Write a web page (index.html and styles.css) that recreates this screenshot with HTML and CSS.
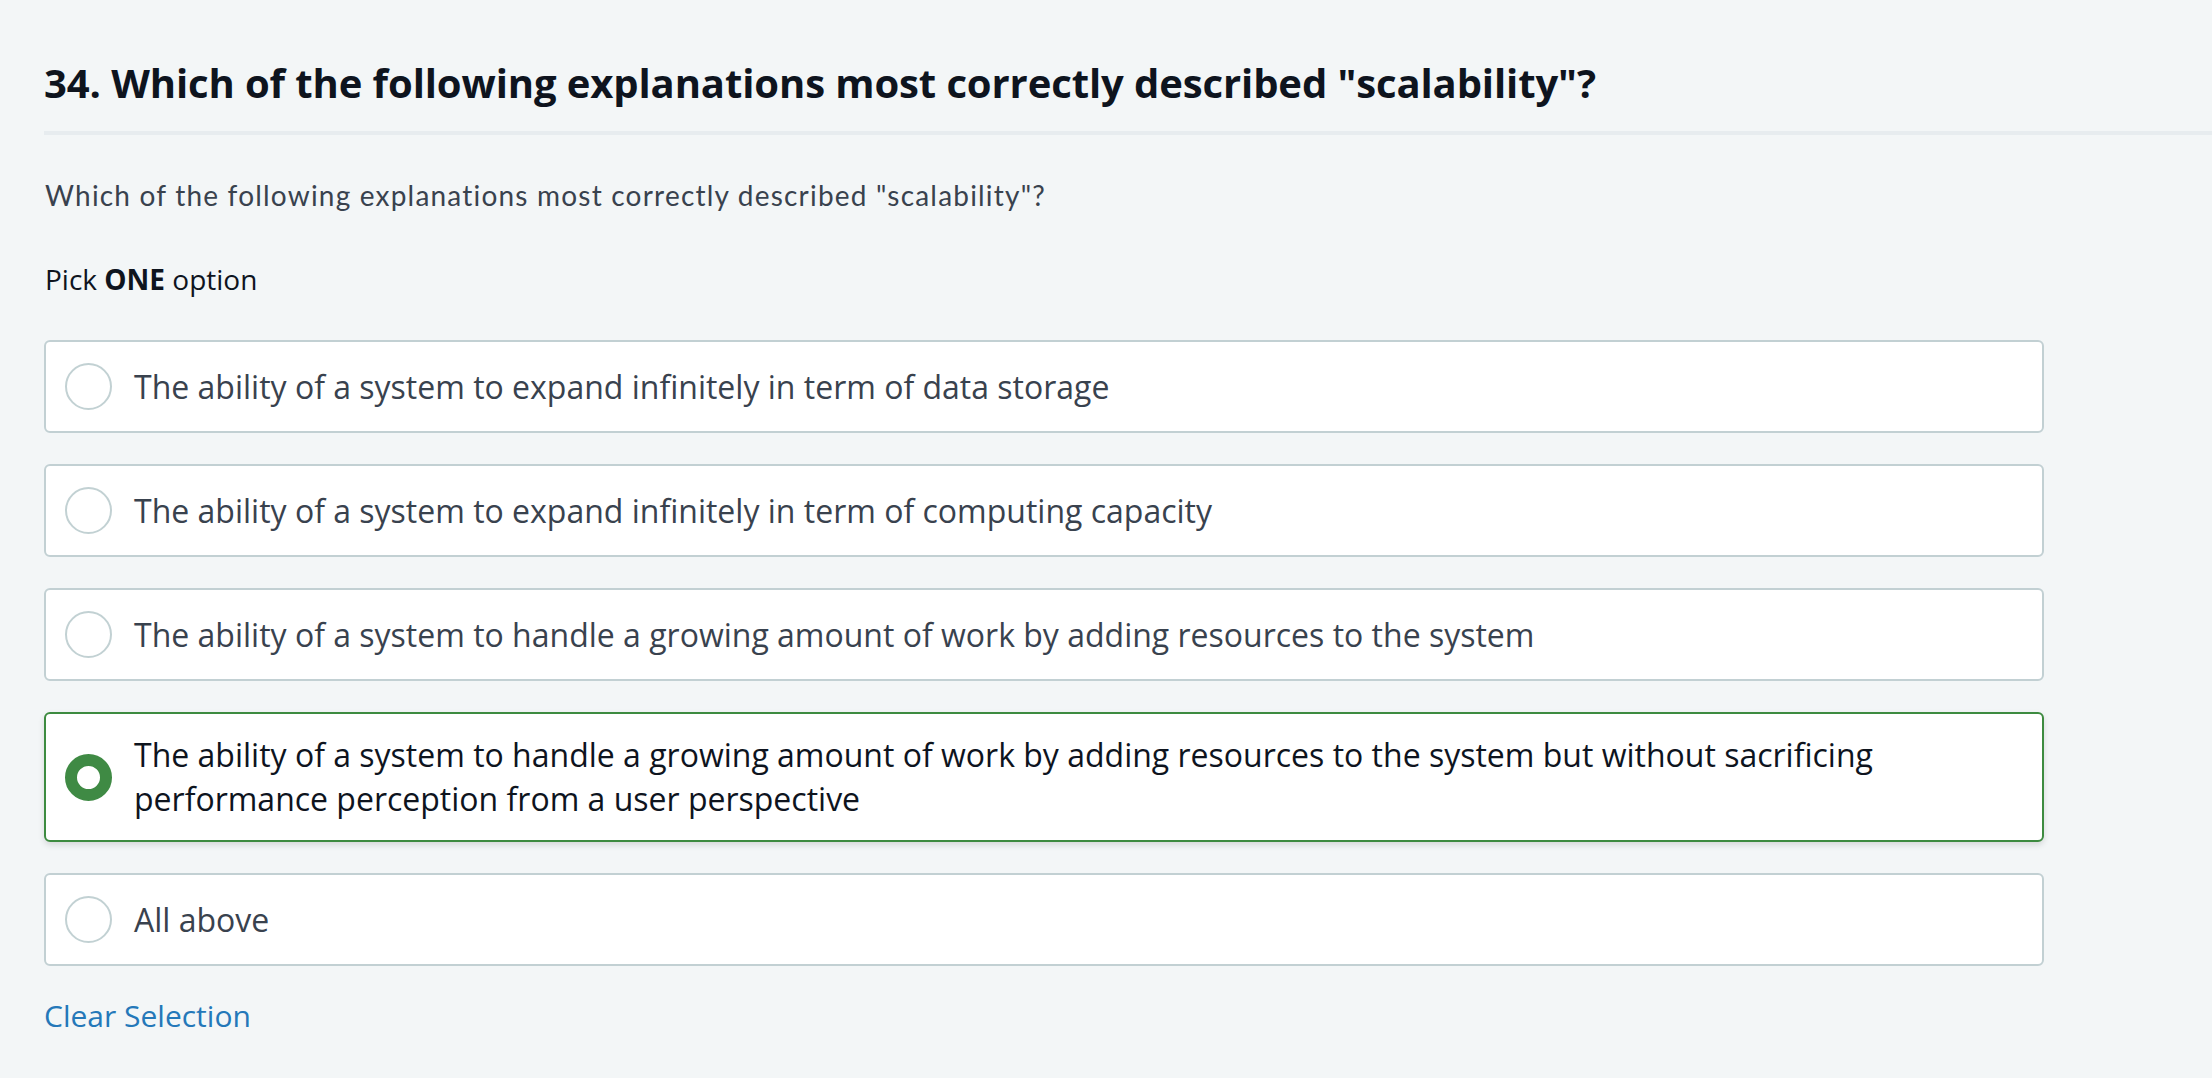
FILE: index.html
```html
<!DOCTYPE html>
<html lang="en">
<head>
<meta charset="utf-8">
<title>Question 34</title>
<link rel="stylesheet" href="styles.css">
</head>
<body>
<main class="page">
  <header class="q-header">
    <h1 class="q-title">34. Which of the following explanations most correctly described "scalability"?</h1>
  </header>
  <section class="q-body">
    <p class="q-desc">Which of the following explanations most correctly described "scalability"?</p>
    <p class="q-pick">Pick <strong>ONE</strong> option</p>
    <div class="options">
      <label class="option">
        <span class="radio"></span>
        <span class="opt-text">The ability of a system to expand infinitely in term of data storage</span>
      </label>
      <label class="option">
        <span class="radio"></span>
        <span class="opt-text">The ability of a system to expand infinitely in term of computing capacity</span>
      </label>
      <label class="option">
        <span class="radio"></span>
        <span class="opt-text">The ability of a system to handle a growing amount of work by adding resources to the system</span>
      </label>
      <label class="option selected">
        <span class="radio"></span>
        <span class="opt-text">The ability of a system to handle a growing amount of work by adding resources to the system but without sacrificing performance perception from a user perspective</span>
      </label>
      <label class="option">
        <span class="radio"></span>
        <span class="opt-text">All above</span>
      </label>
    </div>
    <a class="clear" href="#">Clear Selection</a>
  </section>
</main>
</body>
</html>
```
FILE: styles.css
```css
html, body {
  margin: 0;
  padding: 0;
  background: #f3f6f7;
}
.page {
  padding: 52px 0 0 44px;
  min-height: 1078px;
  box-sizing: border-box;
}
.q-header {
  border-bottom: 4px solid #e7ecef;
  padding-bottom: 17px;
}
.q-title {
  margin: 0;
  font-family: "Open Sans", "Noto Sans", sans-serif;
  font-weight: 700;
  font-size: 40px;
  line-height: 62px;
  color: #0e141e;
  letter-spacing: -0.1px;
}
.q-body {
  width: 2000px;
}
.q-desc {
  margin: 40px 0 0 1px;
  font-family: Lato, "Open Sans", sans-serif;
  font-size: 28px;
  line-height: 40px;
  letter-spacing: 1.2px;
  color: #39424e;
}
.q-pick {
  margin: 44px 0 0 1px;
  font-family: "Open Sans", sans-serif;
  font-size: 28px;
  line-height: 40px;
  color: #0e141e;
}
.q-pick strong {
  font-weight: 700;
}
.options {
  margin-top: 41px;
  display: flex;
  flex-direction: column;
  gap: 31px;
}
.option {
  display: flex;
  align-items: center;
  gap: 22px;
  min-height: 51px;
  padding: 19px 20px 19px 19px;
  background: #ffffff;
  border: 2px solid #c2d0d3;
  border-radius: 6px;
  cursor: pointer;
}
.radio {
  flex: none;
  width: 47px;
  height: 47px;
  box-sizing: border-box;
  border: 2px solid #c2d1d3;
  border-radius: 50%;
  background: #fff;
}
.opt-text {
  font-family: "Open Sans", sans-serif;
  font-size: 32px;
  line-height: 44px;
  color: #39424e;
}
.option.selected {
  border-color: #3d8b40;
  box-shadow: 0 3px 6px rgba(0, 0, 0, 0.12);
}
.option.selected .radio {
  border: 12px solid #3f8a44;
}
.option.selected .opt-text {
  color: #0e141e;
}
.clear {
  display: inline-block;
  margin-top: 30px;
  font-family: "Open Sans", sans-serif;
  font-size: 30px;
  line-height: 40px;
  color: #2478b9;
  text-decoration: none;
}
```
